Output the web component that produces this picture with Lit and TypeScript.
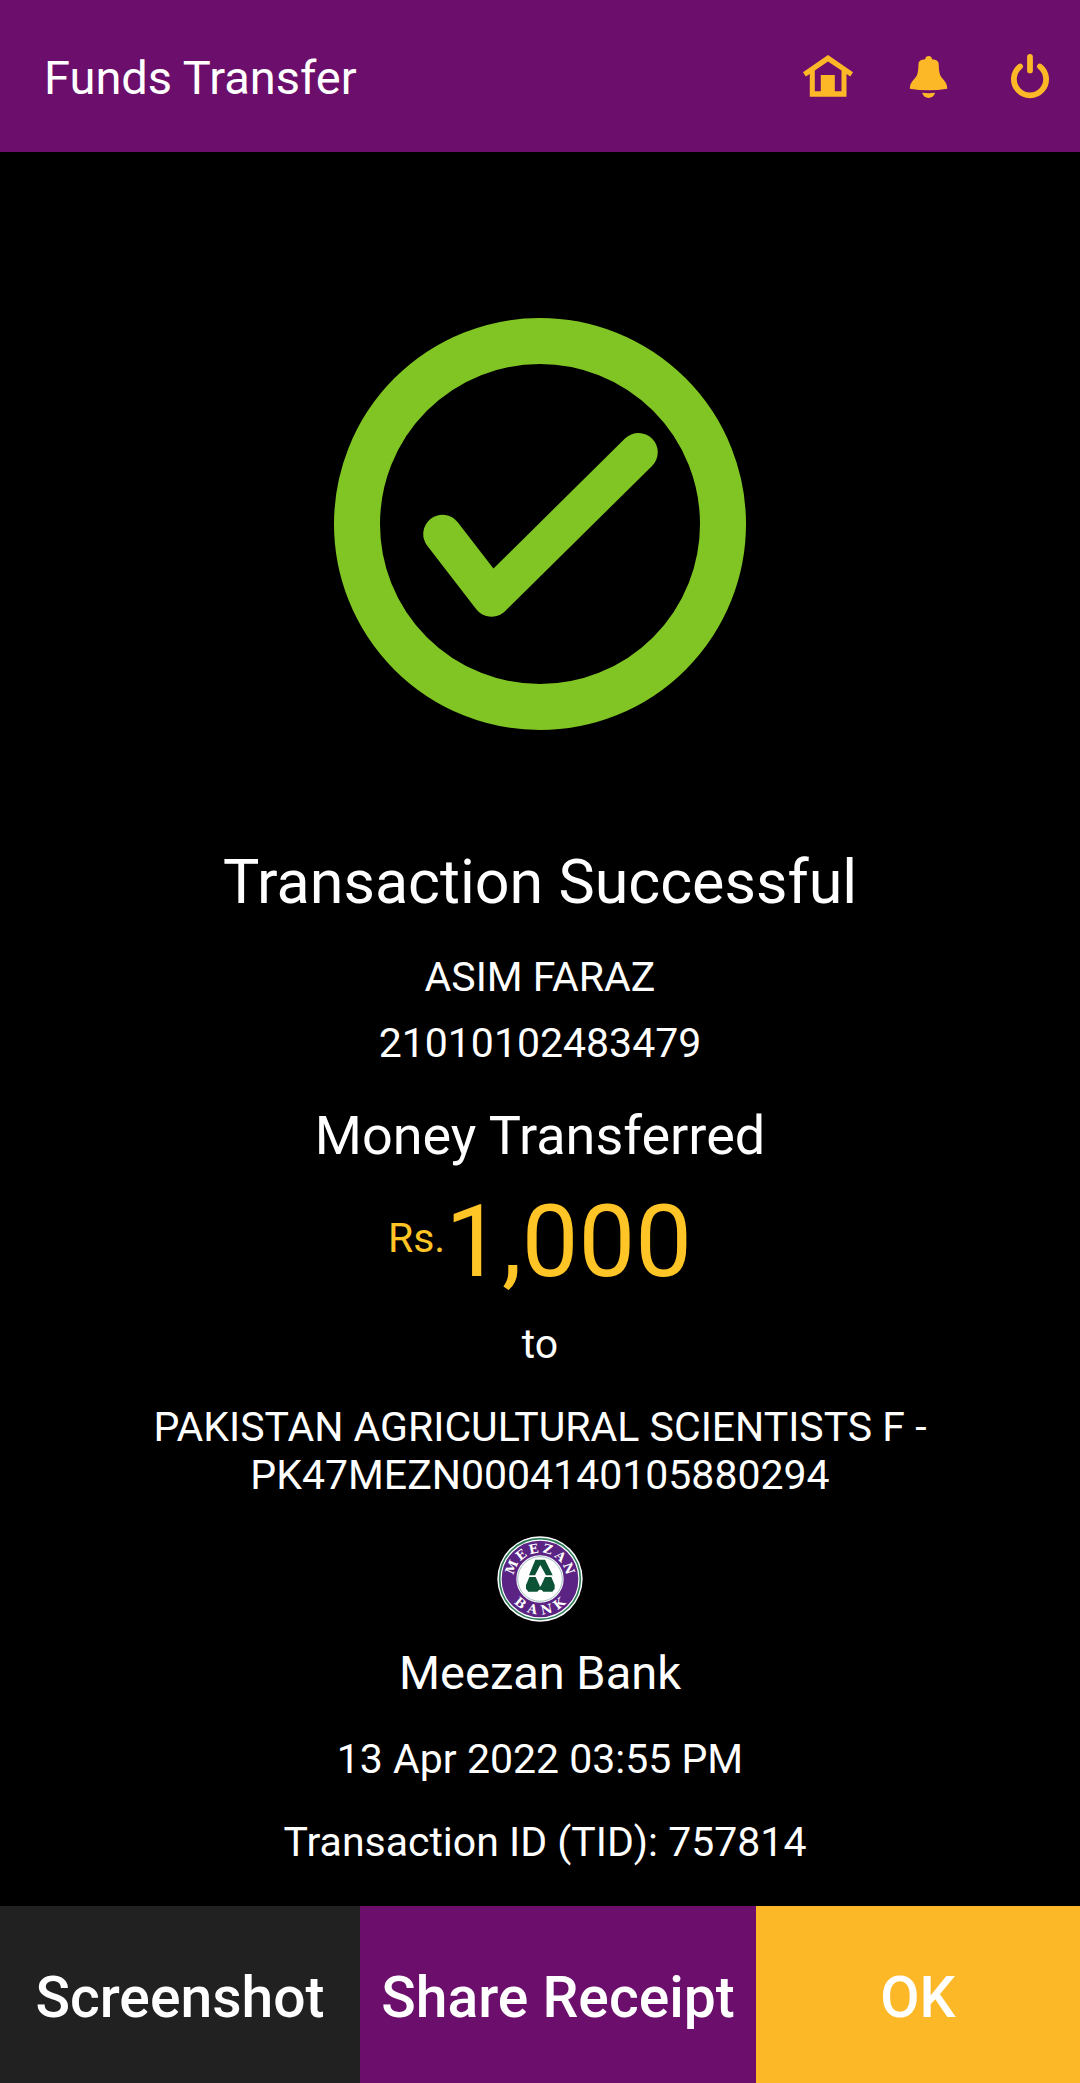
import { LitElement, html, css, svg } from "lit";
import { customElement, property } from "lit/decorators.js";

/** Letters of the bank seal, each turned around the seal's centre. */
const SEAL_TOP: [string, number][] = [
  ["M", -67],
  ["E", -38],
  ["E", -12],
  ["Z", 15],
  ["A", 42],
  ["N", 70],
];
const SEAL_BOTTOM: [string, number][] = [
  ["B", 39],
  ["A", 14],
  ["N", -12],
  ["K", -38],
];

@customElement("bank-seal")
export class BankSeal extends LitElement {
  static styles = css`
    :host {
      display: block;
    }
    .seal {
      display: block;
      width: 86px;
      height: 86px;
    }
    .letter {
      font-family: "DejaVu Serif", "Liberation Serif", serif;
      font-weight: 700;
      font-size: 38px;
      text-anchor: middle;
      fill: #ffffff;
    }
  `;

  render() {
    return html`
      <svg class="seal" viewBox="-129 -129 258 258" role="img" aria-label="Meezan Bank logo">
        <circle r="128" fill="#ffffff" />
        <circle r="121" fill="none" stroke="#2c7a58" stroke-width="5" />
        <circle r="93" fill="none" stroke="#5b2384" stroke-width="44" />
        <circle r="67" fill="none" stroke="#6f9aa0" stroke-width="2" />
        ${SEAL_TOP.map(
          ([c, a]) => svg`<text class="letter" y="-79" transform="rotate(${a})">${c}</text>`,
        )}
        ${SEAL_BOTTOM.map(
          ([c, a]) => svg`<text class="letter" y="106" transform="rotate(${a})">${c}</text>`,
        )}
        <g fill="#0b5236">
          <path d="M-14-58H15L38-11H18L1-42L-15-11H-33Z" />
          <path d="M-32-6H-13L-1 20V31L-8 38H-35L-42 29V18Z" />
          <path d="M34-6H15L3 20V31L10 38H37L44 29V18Z" />
          <path d="M1 20L9 32H-7Z" />
        </g>
      </svg>
    `;
  }
}

@customElement("app-bar")
export class AppBar extends LitElement {
  @property() heading = "";

  static styles = css`
    :host {
      display: block;
    }
    .bar {
      display: flex;
      align-items: center;
      height: 152px;
      padding-left: 44px;
      background: #6c0f6c;
      color: #ffffff;
    }
    .title {
      flex: 1;
      margin: 0;
      padding-top: 4px;
      font-size: 47px;
      line-height: 56px;
      font-weight: 400;
    }
    .actions {
      display: flex;
    }
    .action {
      display: grid;
      place-items: center;
      width: 101px;
      height: 152px;
      padding: 0;
      border: 0;
      background: none;
      color: #fdb827;
      cursor: pointer;
    }
    .icon {
      display: block;
      width: 56px;
      height: 56px;
    }
  `;

  render() {
    return html`
      <header class="bar">
        <h1 class="title">${this.heading}</h1>
        <nav class="actions">
          <button class="action" type="button" aria-label="Home">
            <svg class="icon" viewBox="0 0 56 56" fill="currentColor">
              <path
                fill-rule="evenodd"
                d="M28 7L53 24.3L50.3 28.5L46.5 26V48.7H9.8V26L5.8 28.5L3 24.3ZM28 13.6L14.8 22.6V43.2H20.8V27H34.8V43.2H41.5V22.6Z"
              />
            </svg>
          </button>
          <button class="action" type="button" aria-label="Notifications">
            <svg class="icon" viewBox="0 0 56 56" fill="currentColor">
              <path
                d="M24.2 11.2C24.2 7 31 7 31 11.2C35 11.4 37.6 12.8 37.7 16C37.9 20 37.9 22.5 38.8 26C40 31 46.3 33 46.3 40.7Q37 42.3 27.6 42.3T8.8 40.7C8.8 33 15.2 31 16.4 26C17.3 22.5 17.3 20 17.5 16C17.6 12.8 20.2 11.4 24.2 11.2Z"
              />
              <path d="M21 44.8Q27.6 45.6 34.2 44.8C33 48.2 30.4 50 27.6 50S22.2 48.2 21 44.8Z" />
            </svg>
          </button>
          <button class="action" type="button" aria-label="Log out">
            <svg
              class="icon"
              viewBox="0 0 56 56"
              fill="none"
              stroke="currentColor"
              stroke-width="5.8"
              stroke-linecap="round"
            >
              <path d="M28 9V22.4" />
              <path d="M18.1 18.5A16.1 16.1 0 1 0 37.9 18.5" />
            </svg>
          </button>
        </nav>
      </header>
    `;
  }
}

@customElement("app-root")
export class AppRoot extends LitElement {
  static styles = css`
    :host {
      display: flex;
      flex-direction: column;
      min-height: 100vh;
      background: #000000;
      color: #ffffff;
      font-family: Roboto, "Liberation Sans", sans-serif;
    }
    .receipt {
      flex: 1;
      display: flex;
      flex-direction: column;
      align-items: center;
      padding: 166px 130px 36px;
      text-align: center;
    }
    .tick {
      display: block;
      width: 412px;
      height: 412px;
      margin-bottom: 116px;
    }
    .status,
    .label,
    .line,
    .bank,
    .amount {
      margin: 0;
      font-weight: 400;
    }
    .status {
      font-size: 61px;
      line-height: 72px;
      margin-bottom: 35px;
    }
    .line {
      font-size: 41px;
      line-height: 48px;
      margin-bottom: 35px;
    }
    .line.close {
      margin-bottom: 18px;
    }
    .line.last {
      margin-bottom: 0;
      padding-left: 10px;
    }
    .label {
      margin-top: 2px;
      font-size: 54px;
      line-height: 64px;
      margin-bottom: 14px;
    }
    .amount {
      display: flex;
      align-items: center;
      margin-bottom: 18px;
      color: #ffc425;
      font-size: 101px;
      line-height: 120px;
    }
    .currency {
      padding-bottom: 8px;
      font-size: 41px;
      line-height: 48px;
    }
    .bank {
      margin: 23px 0 34px;
      font-size: 47px;
      line-height: 56px;
    }
    .logo {
      margin-top: 2px;
    }
    .footer {
      display: grid;
      grid-template-columns: 10fr 11fr 9fr;
      height: 177px;
    }
    .button {
      padding: 6px 0 0;
      border: 0;
      color: #ffffff;
      font-family: inherit;
      font-size: 57px;
      line-height: 68px;
      font-weight: 500;
      cursor: pointer;
    }
    .dark {
      background: #212121;
    }
    .purple {
      background: #6c0f6c;
    }
    .gold {
      background: #fdb827;
    }
  `;

  render() {
    return html`
      <app-bar heading="Funds Transfer"></app-bar>
      <main class="receipt">
        <svg class="tick" viewBox="0 0 412 412" fill="none" stroke="#80c524" aria-hidden="true">
          <circle cx="206" cy="206" r="183" stroke-width="46" />
          <path
            d="M108.5 216L157.5 279.5L304.5 134.3"
            stroke-width="38.5"
            stroke-linecap="round"
            stroke-linejoin="round"
          />
        </svg>
        <h2 class="status">Transaction Successful</h2>
        <p class="line close">ASIM FARAZ</p>
        <p class="line">21010102483479</p>
        <h3 class="label">Money Transferred</h3>
        <p class="amount"><span class="currency">Rs.</span><span>1,000</span></p>
        <p class="line">to</p>
        <p class="line">PAKISTAN AGRICULTURAL SCIENTISTS F - PK47MEZN0004140105880294</p>
        <bank-seal class="logo"></bank-seal>
        <p class="bank">Meezan Bank</p>
        <p class="line">13 Apr 2022 03:55 PM</p>
        <p class="line last">Transaction ID (TID): 757814</p>
      </main>
      <footer class="footer">
        <button class="button dark" type="button">Screenshot</button>
        <button class="button purple" type="button">Share Receipt</button>
        <button class="button gold" type="button">OK</button>
      </footer>
    `;
  }
}
